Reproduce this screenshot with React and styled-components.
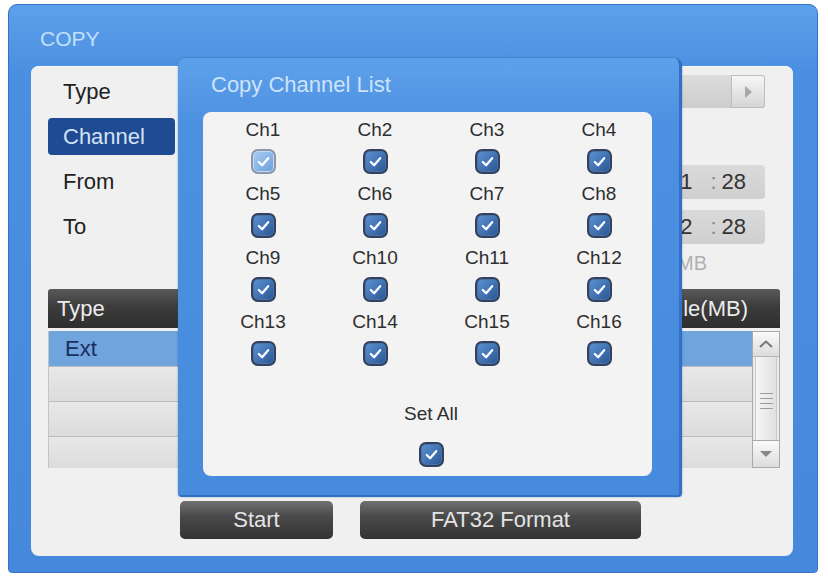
import React from "react";
import styled, { createGlobalStyle } from "styled-components";

const GlobalStyle = createGlobalStyle`
  html, body { margin: 0; padding: 0; background: #fff; }
  body { font-family: "Liberation Sans", Arial, sans-serif; }
`;

const Page = styled.div`
  padding: 4px 10px 3px 8px;
`;

const Window = styled.div`
  position: relative;
  width: 810px;
  height: 569px;
  box-sizing: border-box;
  display: flex;
  flex-direction: column;
  padding: 0 24px 16px 22px;
  background: linear-gradient(#5da0ea, #4b8fe1 12%, #4689dc);
  border: 1px solid #3673c4;
  border-radius: 9px 9px 4px 4px;
`;

const Title = styled.div`
  height: 61px;
  box-sizing: border-box;
  padding: 22px 0 0 9px;
  font-size: 21px;
  line-height: 24px;
  color: #c3e0f9;
`;

const Panel = styled.div`
  flex: 1;
  display: flex;
  flex-direction: column;
  padding: 3px 13px 0 17px;
  background: #f0f0f0;
  border-radius: 8px;
  box-shadow: inset 0 1px 0 #fafafa;
`;

const FormRow = styled.div`
  height: 45px;
  display: flex;
  align-items: center;
`;

const Label = styled.div`
  width: 112px;
  height: 37px;
  padding-left: 15px;
  font-size: 22px;
  line-height: 37px;
  border-radius: 4px;
  color: ${p => (p.$active ? "#d3e2f6" : "#222")};
  background: ${p => (p.$active ? "#1f4b93" : "transparent")};
`;

const Value = styled.div`
  flex: 1;
  display: flex;
  justify-content: flex-end;
  padding-right: 15px;
`;

const Dropdown = styled.div`
  width: 300px;
  height: 33px;
  display: flex;
  justify-content: flex-end;
  background: linear-gradient(#dcdcdc, #cdcdcd);
  border-radius: 3px;
`;

const DropArrow = styled.div`
  width: 32px;
  display: flex;
  align-items: center;
  justify-content: center;
  background: linear-gradient(#f6f6f6, #d6d6d6);
  border: 1px solid #bdbdbd;
  border-radius: 0 3px 3px 0;
`;

const TimeField = styled.div`
  height: 34px;
  display: flex;
  align-items: center;
  padding: 0 19px 0 20px;
  background: linear-gradient(#dadada, #cfcfcf);
  border-radius: 4px;
  font-size: 22px;
  color: #333;
`;

const Colon = styled.span`
  margin: 0 5px 0 18px;
  color: #888;
`;

const InfoRow = styled.div`
  height: 28px;
  display: flex;
  align-items: center;
  justify-content: flex-end;
  padding-right: 73px;
  font-size: 20px;
  color: #b0b0b0;
`;

const Table = styled.div`
  margin-top: 12px;
  display: flex;
  flex-direction: column;
`;

const Header = styled.div`
  height: 39px;
  display: flex;
  align-items: center;
  justify-content: space-between;
  padding: 0 32px 0 9px;
  background: linear-gradient(#5a5a5a, #3c3c3c 45%, #2e2e2e);
  border-radius: 3px 3px 0 0;
  font-size: 22px;
  color: #ececec;
`;

const Body = styled.div`
  margin-top: 3px;
  height: 137px;
  display: flex;
  border-left: 1px solid #c4c4c4;
`;

const Rows = styled.div`
  flex: 1;
  display: flex;
  flex-direction: column;
`;

const Row = styled.div`
  height: ${p => p.$h || 35}px;
  box-sizing: border-box;
  padding-left: 16px;
  font-size: 22px;
  line-height: 35px;
  color: #1b2d5c;
  background: ${p =>
    p.$sel ? "#6fa4dd" : "linear-gradient(#e8e8e8, #dcdcdc)"};
  border-top: ${p => (p.$sel ? "none" : "1px solid #bcbcbc")};
`;

const Scrollbar = styled.div`
  width: 26px;
  display: flex;
  flex-direction: column;
  border: 1px solid #a9a9a9;
  background: #ededed;
`;

const ScrollBtn = styled.div`
  height: ${p => p.$h}px;
  display: flex;
  align-items: center;
  justify-content: center;
  background: linear-gradient(#fafafa, #dcdcdc);
  border-top: ${p => (p.$bottom ? "1px solid #a9a9a9" : "none")};
  border-bottom: ${p => (p.$bottom ? "none" : "1px solid #b4b4b4")};
`;

const Thumb = styled.div`
  flex: 1;
  display: flex;
  flex-direction: column;
  align-items: center;
  padding-top: 36px;
  gap: 4px;
  margin: 0 2px;
  border-left: 1px solid #c8c8c8;
  border-right: 1px solid #c8c8c8;
  background: linear-gradient(90deg, #f6f6f6, #e0e0e0);
`;

const Grip = styled.div`
  width: 13px;
  height: 1px;
  background: #9c9c9c;
`;

const ButtonBar = styled.div`
  margin-top: 33px;
  padding-left: 132px;
  display: flex;
  gap: 27px;
`;

const Button = styled.div`
  width: ${p => p.$w}px;
  height: 38px;
  display: flex;
  align-items: center;
  justify-content: center;
  background: linear-gradient(#707070, #4a4a4a 40%, #333 100%);
  border-radius: 5px;
  font-size: 22px;
  color: #e4e4e4;
`;

/* modal list that sits over the copy window */
const Dialog = styled.div`
  position: absolute;
  left: 169px;
  top: 53px;
  width: 504px;
  height: 439px;
  box-sizing: border-box;
  display: flex;
  flex-direction: column;
  background: linear-gradient(#5ea1ea, #4c90e1 15%, #478bdd);
  border-right: 3px solid #3270c4;
  border-bottom: 2px solid #3270c4;
  border-radius: 8px 8px 4px 4px;
  box-shadow: 0 0 2px rgba(30, 70, 140, 0.5);
`;

const DialogTitle = styled.div`
  height: 54px;
  padding-left: 33px;
  font-size: 22px;
  line-height: 54px;
  color: #cde3fa;
`;

const DialogBody = styled.div`
  flex: 1;
  margin: 0 27px 19px 25px;
  padding-top: 7px;
  background: #f3f3f3;
  border-radius: 8px;
`;

const Grid = styled.div`
  display: grid;
  grid-template-columns: repeat(4, 112px);
  grid-auto-rows: 64px;
  padding-left: 4px;
`;

const Cell = styled.div`
  display: flex;
  flex-direction: column;
  align-items: center;
`;

const ChLabel = styled.div`
  font-size: 19px;
  line-height: 22px;
  color: #2e2e2e;
`;

const SetAll = styled.div`
  width: 448px;
  margin: 28px 0 0 4px;
  display: flex;
  flex-direction: column;
  align-items: center;
  gap: 17px;
`;

const Box = styled.div`
  margin-top: ${p => p.$mt || 0}px;
  width: 21px;
  height: 21px;
  display: flex;
  align-items: center;
  justify-content: center;
  border-radius: 7px;
  border: 2px solid ${p => (p.$focus ? "#8c97ad" : "#33425c")};
  background: ${p =>
    p.$focus
      ? "linear-gradient(135deg, #a9cdf3, #6c9fdb)"
      : "linear-gradient(135deg, #5c93d3, #2a5694)"};
  box-shadow: inset 0 0 0 1px ${p => (p.$focus ? "#c9d9ee" : "#4a72a8")};
`;

function Check({ focus, mt }) {
  return (
    <Box $focus={focus} $mt={mt}>
      <svg width="15" height="15" viewBox="0 0 16 16">
        <polyline
          points="3,8.5 6.5,12 13,4.5"
          fill="none"
          stroke="#fff"
          strokeWidth="2.4"
          strokeLinecap="round"
          strokeLinejoin="round"
        />
      </svg>
    </Box>
  );
}

const channels = Array.from({ length: 16 }, (_, i) => "Ch" + (i + 1));

export default function App() {
  return (
    <Page>
      <GlobalStyle />
      <Window>
        <Title>COPY</Title>
        <Panel>
          <FormRow>
            <Label>Type</Label>
            <Value>
              <Dropdown>
                <DropArrow>
                  <svg width="10" height="14" viewBox="0 0 10 14">
                    <polygon points="2,1 9,7 2,13" fill="#a8a8a8" />
                  </svg>
                </DropArrow>
              </Dropdown>
            </Value>
          </FormRow>
          <FormRow>
            <Label $active>Channel</Label>
            <Value />
          </FormRow>
          <FormRow>
            <Label>From</Label>
            <Value>
              <TimeField>
                21<Colon>:</Colon>28
              </TimeField>
            </Value>
          </FormRow>
          <FormRow>
            <Label>To</Label>
            <Value>
              <TimeField>
                22<Colon>:</Colon>28
              </TimeField>
            </Value>
          </FormRow>
          <InfoRow>56MB</InfoRow>
          <Table>
            <Header>
              <span>Type</span>
              <span>File(MB)</span>
            </Header>
            <Body>
              <Rows>
                <Row $sel>Ext</Row>
                <Row />
                <Row />
                <Row $h={32} />
              </Rows>
              <Scrollbar>
                <ScrollBtn $h={24}>
                  <svg width="14" height="8" viewBox="0 0 14 8">
                    <polyline
                      points="1,7 7,1.5 13,7"
                      fill="none"
                      stroke="#777"
                      strokeWidth="2"
                    />
                  </svg>
                </ScrollBtn>
                <Thumb>
                  <Grip />
                  <Grip />
                  <Grip />
                  <Grip />
                </Thumb>
                <ScrollBtn $h={26} $bottom>
                  <svg width="12" height="6" viewBox="0 0 12 6">
                    <polygon points="0,0 12,0 6,6" fill="#888" />
                  </svg>
                </ScrollBtn>
              </Scrollbar>
            </Body>
          </Table>
          <ButtonBar>
            <Button $w={153}>Start</Button>
            <Button $w={281}>FAT32 Format</Button>
          </ButtonBar>
        </Panel>

        <Dialog>
          <DialogTitle>Copy Channel List</DialogTitle>
          <DialogBody>
            <Grid>
              {channels.map((ch, i) => (
                <Cell key={ch}>
                  <ChLabel>{ch}</ChLabel>
                  <Check focus={i === 0} mt={8} />
                </Cell>
              ))}
            </Grid>
            <SetAll>
              <ChLabel>Set All</ChLabel>
              <Check />
            </SetAll>
          </DialogBody>
        </Dialog>
      </Window>
    </Page>
  );
}
